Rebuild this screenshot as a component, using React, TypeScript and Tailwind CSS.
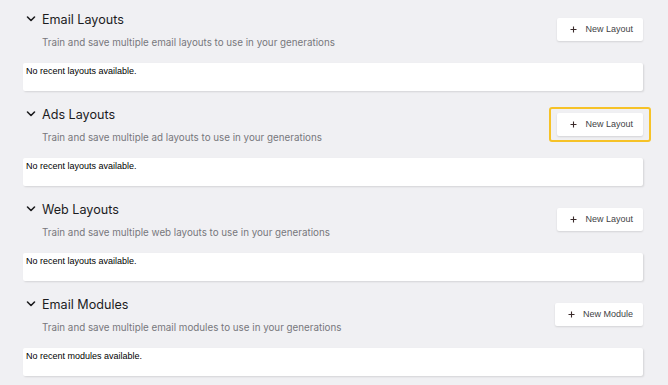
const sections = [
  {
    title: "Email Layouts",
    desc: "Train and save multiple email layouts to use in your generations",
    action: "New Layout",
    empty: "No recent layouts available.",
  },
  {
    title: "Ads Layouts",
    desc: "Train and save multiple ad layouts to use in your generations",
    action: "New Layout",
    empty: "No recent layouts available.",
    focused: true,
  },
  {
    title: "Web Layouts",
    desc: "Train and save multiple web layouts to use in your generations",
    action: "New Layout",
    empty: "No recent layouts available.",
  },
  {
    title: "Email Modules",
    desc: "Train and save multiple email modules to use in your generations",
    action: "New Module",
    empty: "No recent modules available.",
  },
];

export default function App() {
  return (
    <div className="min-h-[385px] w-[668px] overflow-hidden bg-[#f0f0f3] pl-[23px] pr-[25px] pt-[12px]">
      {sections.map((s) => (
        <Section key={s.title} {...s} />
      ))}
    </div>
  );
}

function Section({
  title,
  desc,
  action,
  empty,
  focused = false,
}: {
  title: string;
  desc: string;
  action: string;
  empty: string;
  focused?: boolean;
}) {
  return (
    <section className="h-[95px]">
      <div className="flex items-start justify-between">
        <div>
          <div className="flex items-center">
            <Chevron />
            <h2 className="ml-[6px] font-['Inter',sans-serif] text-[12.6px] leading-[16px] text-[#1c1c1e]">
              {title}
            </h2>
          </div>
          <p className="mt-[8px] pl-[19px] font-['Inter',sans-serif] text-[9.8px] leading-[14px] text-[#77777c]">
            {desc}
          </p>
        </div>
        <div className="relative mt-[6px]">
          {focused && (
            <span className="pointer-events-none absolute -inset-x-[8px] -inset-y-[6px] rounded-[3px] border-2 border-[#f6c227]" />
          )}
          <button className="flex h-[23px] items-center gap-[8px] rounded-[2px] bg-white pl-[13px] pr-[10px] font-['Liberation_Sans',Arial,sans-serif] text-[9px] text-[#3f3f46] shadow-[0_1px_2px_rgba(0,0,0,0.12)]">
            <Plus />
            {action}
          </button>
        </div>
      </div>
      <div className="mt-[13px] h-[28px] rounded-[2px] bg-white pl-[3px] pt-[2px] font-['Liberation_Sans',Arial,sans-serif] text-[9px] leading-[12px] text-black shadow-[1px_1px_2px_rgba(0,0,0,0.12)]">
        {empty}
      </div>
    </section>
  );
}

function Chevron() {
  return (
    <svg width="10" height="8" viewBox="0 0 10 8" className="ml-[3px] -mt-[2px]">
      <polyline
        points="1.5,2 5,5.5 8.5,2"
        fill="none"
        stroke="#1c1c1e"
        strokeWidth="1.6"
        strokeLinecap="round"
        strokeLinejoin="round"
      />
    </svg>
  );
}

function Plus() {
  return (
    <svg width="7" height="7" viewBox="0 0 7 7">
      <path d="M3.5 0.5v6M0.5 3.5h6" stroke="#3a2a2a" strokeWidth="1.1" />
    </svg>
  );
}
